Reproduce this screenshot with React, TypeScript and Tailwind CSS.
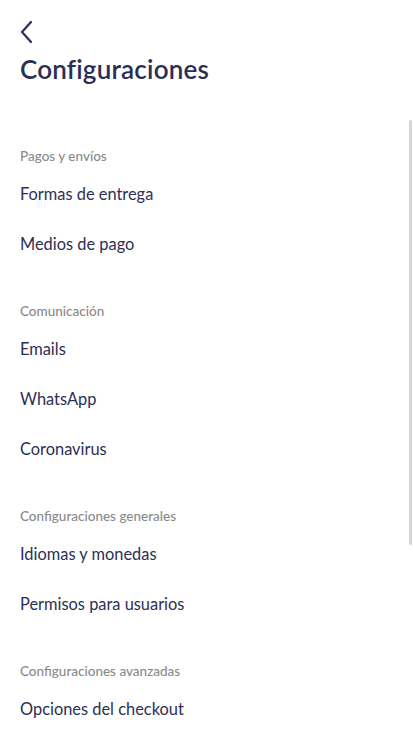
const sections = [
  { title: 'Pagos y envíos', items: ['Formas de entrega', 'Medios de pago'] },
  { title: 'Comunicación', items: ['Emails', 'WhatsApp', 'Coronavirus'] },
  { title: 'Configuraciones generales', items: ['Idiomas y monedas', 'Permisos para usuarios'] },
  { title: 'Configuraciones avanzadas', items: ['Opciones del checkout'] },
]

export default function App() {
  return (
    <div
      className="relative h-[734px] w-[413px] overflow-hidden bg-white text-[#2c2f55]"
      style={{ fontFamily: 'Lato, "Noto Sans", sans-serif' }}
    >
      {/* Header */}
      <div className="px-5 pt-5">
        <button className="flex h-6 w-6 items-center">
          <svg className="h-[24px] w-[14px]" viewBox="0 0 14 24" fill="none" stroke="currentColor">
            <path d="M11 2 L2 12 L11 22" strokeWidth={2.2} strokeLinecap="round" strokeLinejoin="round" />
          </svg>
        </button>
        <h1 className="mt-[10px] text-[26px] font-semibold leading-[30px] tracking-[0.2px]">Configuraciones</h1>
      </div>

      {/* List */}
      <div className="mt-[64px] px-5">
        {sections.map((section) => (
          <div key={section.title} className="mb-[34px]">
            <div className="h-[16px] text-[13.5px] font-medium leading-[16px] text-[#8a8a8c]">{section.title}</div>
            <div className="mt-[5px]">
              {section.items.map((item) => (
                <div key={item} className="flex h-[50px] items-center text-[16.4px] leading-5">
                  {item}
                </div>
              ))}
            </div>
          </div>
        ))}
      </div>

      {/* Scrollbar thumb */}
      <div className="absolute right-[1px] top-[120px] h-[425px] w-[3px] rounded-full bg-[#d6d6d6]" />
    </div>
  )
}
